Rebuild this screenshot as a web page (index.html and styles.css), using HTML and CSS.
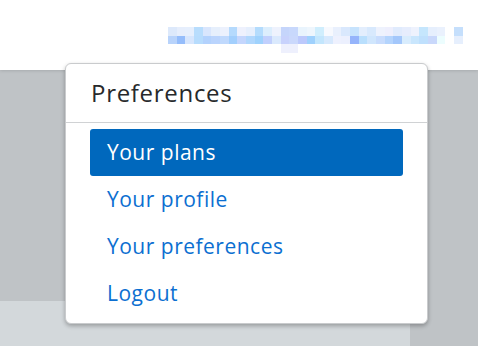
FILE: index.html
```html
<!DOCTYPE html>
<html lang="en">
<head>
<meta charset="utf-8">
<title>Preferences</title>
<link rel="stylesheet" href="styles.css">
</head>
<body>
<header class="topbar">
  <div class="blurred-user" aria-label="user email (obscured)">
    <div class="px-row row-a"></div>
    <div class="px-row row-b"></div>
    <div class="px-row row-c"></div>
  </div>
</header>
<main class="content">
  <div class="strip"></div>
</main>
<div class="dropdown">
  <div class="dropdown-title">Preferences</div>
  <ul class="menu">
    <li><a class="menu-item active" href="#">Your plans</a></li>
    <li><a class="menu-item" href="#">Your profile</a></li>
    <li><a class="menu-item" href="#">Your preferences</a></li>
    <li><a class="menu-item" href="#">Logout</a></li>
  </ul>
</div>
</body>
</html>
```
FILE: styles.css
```css
* { box-sizing: border-box; }
html, body { margin: 0; padding: 0; }
body {
  width: 478px;
  height: 346px;
  overflow: hidden;
  background: #bfc3c6;
  font-family: "Open Sans", "Liberation Sans", sans-serif;
  position: relative;
}
.topbar {
  height: 70px;
  background: #ffffff;
  display: flex;
  justify-content: flex-start;
  padding: 27px 0 0 168px;
  position: relative;
  z-index: 1;
  box-shadow: 0 1px 3px rgba(0,0,0,0.12);
}
.blurred-user {
  display: flex;
  flex-direction: column;
  width: 295px;
}
.px-row { height: 8.67px; width: 295px; }
.row-a {
  background: linear-gradient(to right,
    #dde9fb 0 8.67px, #e6eefc 8.67px 17.33px, #e6effd 17.33px 26px, #b8ddfd 26px 34.67px,
    #d9e6fd 34.67px 43.33px, #e6effc 43.33px 52px, #ecf1fd 52px 60.67px, #b5dafd 60.67px 69.33px,
    #eef1fd 69.33px 78px, #e6effd 78px 86.67px, #b4dcfd 86.67px 95.33px, #dceefd 95.33px 104px,
    #eef2fd 104px 112.67px, #c5d5fb 112.67px 121.33px, #c8d8fc 121.33px 130px, #e9f4fd 130px 138.67px,
    #eef6fd 138.67px 147.33px, #d0eefd 147.33px 156px, #f7f9fe 156px 164.67px, #e9f0fd 164.67px 173.33px,
    #d9e8fd 173.33px 182px, #c7e3fd 182px 190.67px, #e3eefd 190.67px 199.33px, #d8e9fd 199.33px 208px,
    #eef2fd 208px 216.67px, #eeeffd 216.67px 225.33px, #e0ebfd 225.33px 234px, #e6edfd 234px 242.67px,
    #eef2fd 242.67px 251.33px, #c5e6fd 251.33px 260px, #e6effd 260px 268.67px, #eaf1fd 268.67px 277.33px,
    #ffffff 277.33px 286px, #c5dffc 286px 295px);
}
.row-b {
  background: linear-gradient(to right,
    #b8d3fb 0 8.67px, #95bdfb 8.67px 17.33px, #d7e6fd 17.33px 26px, #b7dcfd 26px 34.67px,
    #b3d2fd 34.67px 43.33px, #bad4fd 43.33px 52px, #c0d9fd 52px 60.67px, #a2cffd 60.67px 69.33px,
    #c4d6fd 69.33px 78px, #b0d7fd 78px 86.67px, #9fd2fd 86.67px 95.33px, #c1d0fd 95.33px 104px,
    #dae9fd 104px 112.67px, #c8d2fc 112.67px 121.33px, #cad8fc 121.33px 130px, #bcc9fc 130px 138.67px,
    #9fd1fd 138.67px 147.33px, #c3e6fd 147.33px 156px, #d7e9fd 156px 164.67px, #eef1fe 164.67px 173.33px,
    #ecf0fe 173.33px 182px, #95b4fb 182px 190.67px, #b9dffd 190.67px 199.33px, #d0e6fd 199.33px 208px,
    #c8dcfd 208px 216.67px, #b4d4fd 216.67px 225.33px, #a3c7fb 225.33px 234px, #d8ecfd 234px 242.67px,
    #c9e6fd 242.67px 251.33px, #bfe0fd 251.33px 260px, #c9d8fb 260px 268.67px, #ecfdfe 268.67px 277.33px,
    #ffffff 277.33px 286px, #e6effd 286px 295px);
}
.row-c {
  background: linear-gradient(to right,
    #ffffff 0 112.67px, #eef0fd 112.67px 130px, #ffffff 130px 295px);
}
.content {
  height: 276px;
  display: flex;
  flex-direction: column;
  justify-content: flex-end;
}
.strip {
  width: 410px;
  height: 45px;
  background: #d3d8db;
}
.dropdown {
  position: absolute;
  left: 65px;
  top: 63px;
  width: 363px;
  height: 261px;
  background: #ffffff;
  border: 1px solid #c9cbcd;
  border-radius: 6px;
  box-shadow: 0 2px 4px rgba(0,0,0,0.28);
  z-index: 2;
}
.dropdown-title {
  height: 59px;
  border-bottom: 1px solid #d0d2d4;
  padding: 14px 0 0 25px;
  font-size: 24px;
  letter-spacing: 0.7px;
  color: #27292b;
  line-height: 30px;
}
.menu {
  list-style: none;
  margin: 0;
  padding: 6px 24px;
}
.menu-item {
  display: flex;
  align-items: center;
  height: 47px;
  padding: 0 0 2px 17px;
  border-radius: 3px;
  font-size: 21px;
  font-weight: 500;
  letter-spacing: 0.5px;
  color: #0c6fd1;
  text-decoration: none;
}
.menu-item.active {
  background: #0068bd;
  color: #ffffff;
}
```
